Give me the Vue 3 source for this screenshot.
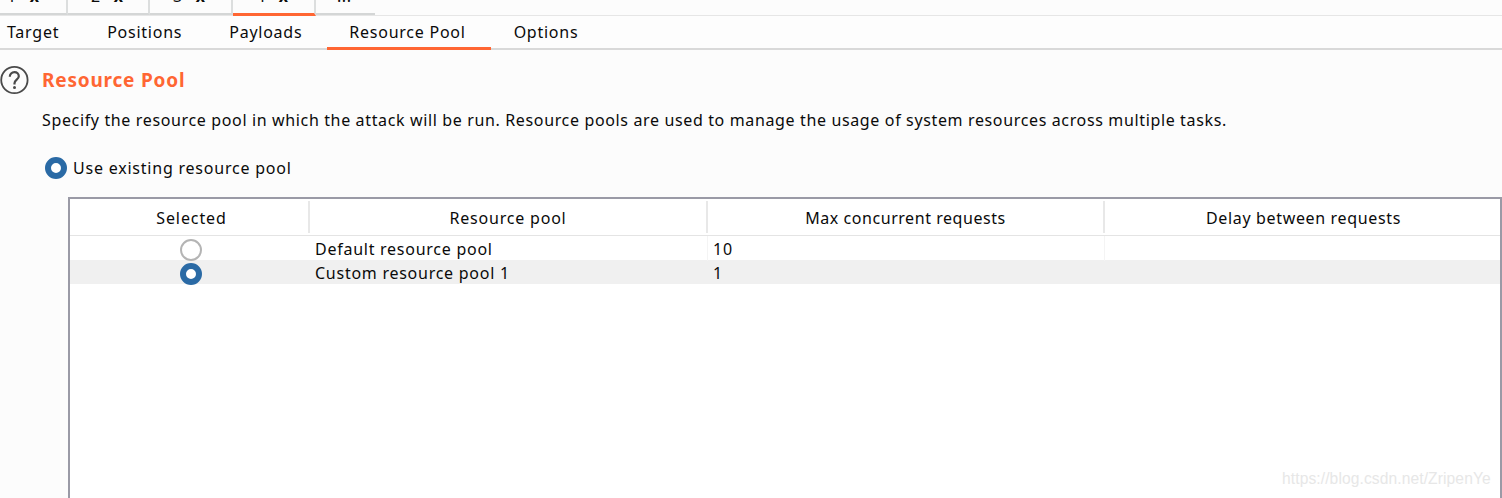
<template>
  <div class="page">
    <div class="attack-tabs">
      <div v-for="t in attackTabs" :key="t.n" class="attack-tab" :class="{ active: t.active }">
        <span class="num">{{ t.n }}</span><span class="x">x</span>
      </div>
      <div class="attack-tab more"><span class="num">...</span></div>
    </div>

    <div class="sub-tabs">
      <div v-for="t in subTabs" :key="t" class="sub-tab" :class="{ active: t == 'Resource Pool' }">{{ t }}</div>
    </div>

    <div class="content">
      <div class="title-row">
        <svg class="help" width="30" height="30" viewBox="0 0 30 30">
          <circle cx="14.4" cy="15" r="13.2" fill="none" stroke="#4a4a4a" stroke-width="1.8" />
          <path d="M9.8 11.8c0-2.8 2-4.6 4.6-4.6s4.4 1.7 4.4 4c0 3.2-4.3 3.6-4.3 7v1.2" fill="none" stroke="#4a4a4a" stroke-width="2.2" />
          <circle cx="14.5" cy="22.6" r="1.5" fill="#4a4a4a" />
        </svg>
        <h1>Resource Pool</h1>
      </div>
      <p class="desc">Specify the resource pool in which the attack will be run. Resource pools are used to manage the usage of system resources across multiple tasks.</p>
      <div class="option">
        <span class="radio on"></span>
        <span>Use existing resource pool</span>
      </div>

      <div class="table">
        <div class="thead">
          <div v-for="h in headers" :key="h" class="th"><span>{{ h }}</span></div>
        </div>
        <div v-for="r in rows" :key="r.name" class="tr" :class="{ alt: r.selected }">
          <div class="td center"><span class="radio" :class="{ on: r.selected }"></span></div>
          <div class="td">{{ r.name }}</div>
          <div class="td">{{ r.max }}</div>
          <div class="td"></div>
        </div>
      </div>
    </div>

    <div class="watermark">https://blog.csdn.net/ZripenYe</div>
  </div>
</template>

<script setup>
const attackTabs = [
  { n: "1" },
  { n: "2" },
  { n: "3" },
  { n: "4", active: true },
]
const subTabs = ["Target", "Positions", "Payloads", "Resource Pool", "Options"]
const headers = ["Selected", "Resource pool", "Max concurrent requests", "Delay between requests"]
const rows = [
  { name: "Default resource pool", max: "10", selected: false },
  { name: "Custom resource pool 1", max: "1", selected: true },
]
</script>

<style>
html, body {
  margin: 0;
  background: #fcfcfc;
}
</style>

<style scoped>
.page {
  position: relative;
  width: 1502px;
  height: 498px;
  overflow: hidden;
  background: #fcfcfc;
  color: #0a0a0a;
  font-family: "Noto Sans", "Open Sans", sans-serif;
  font-size: 16px;
  letter-spacing: 0.55px;
}

.attack-tabs {
  display: flex;
  height: 15px;
  border-bottom: 1px solid #e6e6e6;
}
.attack-tab {
  box-sizing: border-box;
  width: 83px;
  height: 15px;
  padding-left: 23px;
  overflow: hidden;
  display: flex;
  gap: 13px;
  background: #fcfcfc;
  border-right: 2px solid #dcdede;
  border-bottom: 2px solid #d4d6d6;
  line-height: 16px;
}
.attack-tab:first-child {
  width: 68px;
  padding-left: 7px;
}
.attack-tab:nth-child(2) {
  width: 82px;
}
.attack-tab.active {
  height: 16px;
  border-bottom: 3px solid #ff6633;
}
.attack-tab.more {
  width: 59px;
  padding-left: 21px;
  border-right: 0;
}
.num, .x {
  display: block;
  margin-top: -12px;
}
.x {
  font-weight: bold;
}

.sub-tabs {
  display: flex;
  box-sizing: border-box;
  height: 34px;
  padding-left: 7px;
  border-bottom: 2px solid #d9d9d9;
  background: #fdfdfd;
  letter-spacing: 0.75px;
}
.sub-tab {
  height: 34px;
  box-sizing: border-box;
  padding: 5px 0 0;
  margin-right: 47px;
  line-height: 22px;
}
.sub-tab:first-child {
  margin-right: 48px;
}
.sub-tab.active {
  margin-left: -22px;
  margin-right: 23px;
  padding: 5px 25px 0 22px;
  border-bottom: 3px solid #ff6633;
}

.content {
  padding: 15px 0 0 0;
}
.title-row {
  display: flex;
  align-items: center;
  height: 30px;
}
.help {
  flex: none;
  width: 30px;
  margin-right: 12px;
}
h1 {
  margin: 0;
  font-size: 19px;
  font-weight: bold;
  color: #ff6633;
  letter-spacing: 0.8px;
}
.desc {
  margin: 13px 0 0 42px;
  line-height: 24px;
  white-space: nowrap;
  letter-spacing: 0.64px;
}
.option {
  display: flex;
  align-items: center;
  gap: 6px;
  margin: 24px 0 0 45px;
  line-height: 24px;
  letter-spacing: 0.78px;
}

.radio {
  display: inline-block;
  box-sizing: border-box;
  width: 22px;
  height: 22px;
  border: 2px solid #b4b4b4;
  border-radius: 50%;
  background: #fff;
}
.radio.on {
  border: 6.5px solid #2a6aa5;
}

.table {
  box-sizing: border-box;
  height: 320px;
  margin: 17px 0 0 68px;
  border: 2px solid #9a9aa6;
  border-bottom: 0;
  background: #fff;
}
.thead, .tr {
  display: grid;
  grid-template-columns: 240px 398px 397px 1fr;
}
.thead {
  height: 36px;
  border-bottom: 1px solid #e4e4e4;
}
.th {
  display: flex;
  align-items: center;
  justify-content: center;
  margin: 2px 0 2px;
  padding-top: 2px;
  box-sizing: border-box;
  border-right: 2px solid #e8e8e8;
}
.th:nth-child(1) {
  padding-left: 5px;
  letter-spacing: 0.9px;
}
.th:nth-child(2) {
  letter-spacing: 0.8px;
}
.th:nth-child(4) {
  padding-left: 2px;
  letter-spacing: 0.65px;
  border-right: 0;
}
.tr {
  height: 24px;
  line-height: 24px;
  letter-spacing: 0.74px;
}
.tr.alt {
  background: #f0f0f0;
}
.td {
  box-sizing: border-box;
  padding: 1px 0 0 5px;
  white-space: nowrap;
  border-right: 1px solid #f4f4f4;
}
.tr.alt .td {
  border-right: 0;
}
.td:last-child {
  border-right: 0;
}
.td.center {
  padding: 2px 0 0 1px;
  border-right: 0;
  display: flex;
  align-items: center;
  justify-content: center;
}

.watermark {
  position: absolute;
  left: 1282px;
  top: 470px;
  font-family: "Liberation Sans", sans-serif;
  font-size: 15.6px;
  letter-spacing: 0.1px;
  color: #e7e7e7;
}
</style>
